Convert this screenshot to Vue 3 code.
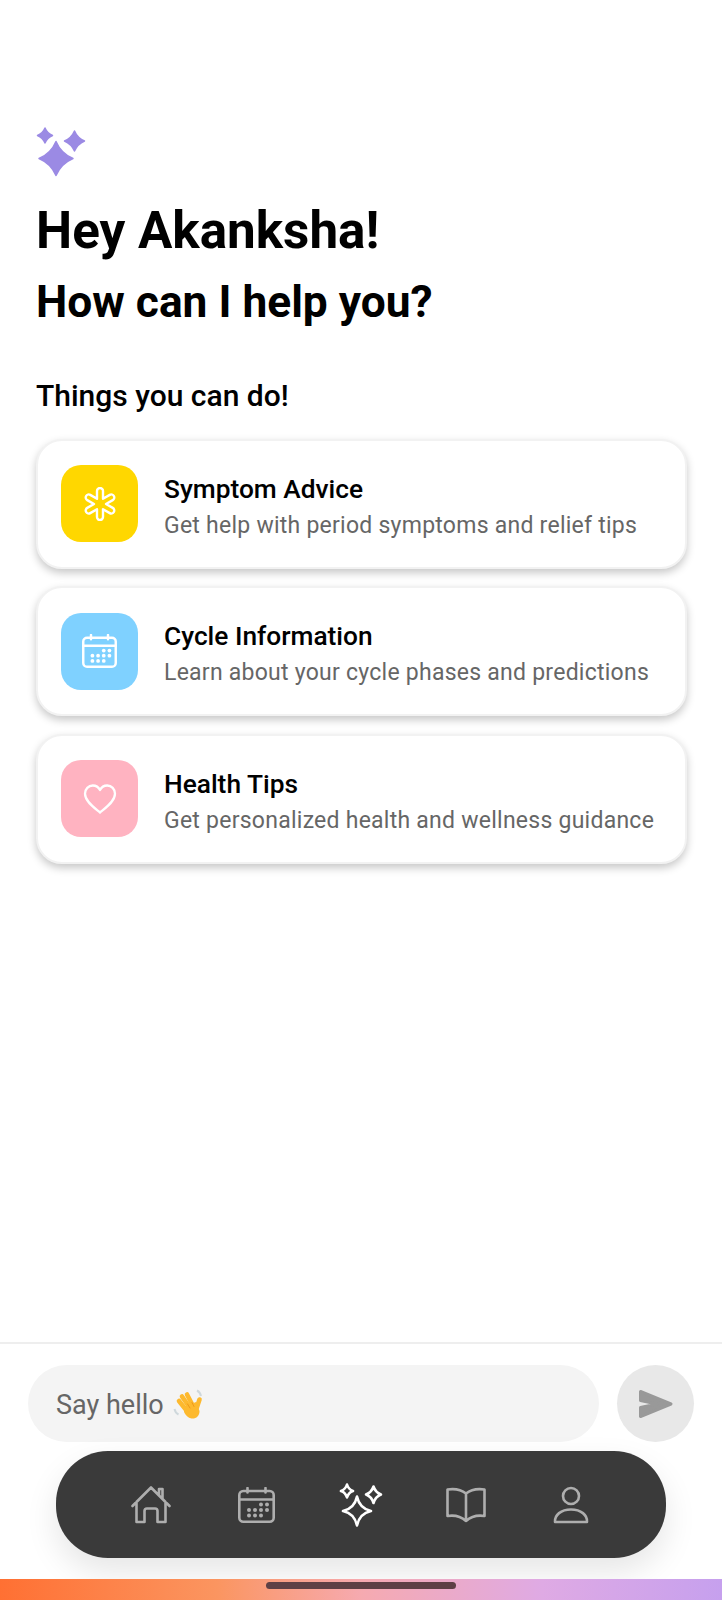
<template>
  <div class="page">
    <svg class="sprite" width="0" height="0">
      <symbol id="calendar" viewBox="0 0 37 36">
        <rect x="1.3" y="4" width="34.4" height="30.7" rx="4" fill="none" stroke="currentColor" stroke-width="2.6" />
        <path d="M1.300 12.500H35.700M9.500 1V5.500M27.500 1V5.500" fill="none" stroke="currentColor" stroke-width="2.6" stroke-linecap="round" />
        <circle v-for="d in calendarDots" :key="d[0] + '-' + d[1]" :cx="d[0]" :cy="d[1]" r="2" fill="currentColor" />
      </symbol>
    </svg>

    <main class="content">
      <svg class="sparkle-logo" width="50" height="50" viewBox="0 0 50 50">
        <path d="M9 1Q11.200 6.300 16.500 8.500Q11.200 10.700 9 16Q6.800 10.700 1.500 8.500Q6.800 6.300 9 1Z" />
        <path d="M38.500 4Q41.500 11 48.500 14Q41.500 17 38.500 24Q35.500 17 28.500 14Q35.500 11 38.500 4Z" />
        <path d="M20 14.500Q25 26.500 37 31.500Q25 36.500 20 48.500Q15 36.500 3 31.500Q15 26.500 20 14.500Z" />
      </svg>
      <h1 class="greeting">Hey Akanksha!</h1>
      <h2 class="question">How can I help you?</h2>
      <h3 class="section-title">Things you can do!</h3>

      <div class="cards">
        <div v-for="card in cards" :key="card.title" class="card">
          <div class="card-icon" :class="card.tone">
            <svg v-if="card.icon === 'asterisk'" width="34" height="34" viewBox="-17 -17 34 34">
              <path :d="asteriskPath" fill="none" stroke="#fff" stroke-width="2.4" stroke-linejoin="round" />
            </svg>
            <svg v-else-if="card.icon === 'calendar'" width="35" height="34">
              <use href="#calendar" />
            </svg>
            <svg v-else width="34" height="30" viewBox="0 0 34 30">
              <path d="M17 28.500C12 24.300 2 17.500 2 9.800C2 5 5.500 1.500 9.800 1.500C12.800 1.500 15.500 3 17 6C18.500 3 21.200 1.500 24.200 1.500C28.500 1.500 32 5 32 9.800C32 17.500 22 24.300 17 28.500Z" fill="none" stroke="#fff" stroke-width="2.300" stroke-linejoin="round" />
            </svg>
          </div>
          <div class="card-text">
            <div class="card-title">{{ card.title }}</div>
            <div class="card-sub">{{ card.sub }}</div>
          </div>
        </div>
      </div>
    </main>

    <div class="composer">
      <div class="input">
        <span class="placeholder">Say hello</span>
        <svg class="wave" width="34" height="34" viewBox="0 0 34 34">
          <path d="M26 3.500C28 4.500 29.500 6.500 30 9M3.500 22C4 24.500 5.500 26.500 7.500 27.500" fill="none" stroke="#cfd8dc" stroke-width="2" />
          <g fill="none" stroke="#fdb92e" stroke-width="4.600" stroke-linecap="round">
            <path d="M8 14L16 24" />
            <path d="M11 9.500L19 21" />
            <path d="M16 7.500L22 19" />
            <path d="M28.500 12.500L25 23" />
          </g>
          <path d="M13 20L25 15L28.500 24C28.500 29 25 32 20.500 31.500C17 31 14.500 28 13 25Z" fill="#fdb92e" />
          <path d="M19 21L16.500 17M23 19.500L21 15.500" fill="none" stroke="#f09a1a" stroke-width="1" stroke-linecap="round" />
        </svg>
      </div>
      <button class="send" type="button" aria-label="Send">
        <svg width="36" height="30" viewBox="0 0 36 30">
          <path d="M2.500 2.500L33 15L2.500 27.500V18.500L19 15L2.500 11.500Z" fill="#999" stroke="#999" stroke-width="3" stroke-linejoin="round" />
        </svg>
      </button>
    </div>

    <nav class="nav">
      <span class="nav-item">
        <svg width="40" height="38" viewBox="0 0 40 38" fill="none" stroke="#aeaeae" stroke-width="2.600" stroke-linejoin="round" stroke-linecap="round">
          <path d="M1.500 20L20 1.500L38.500 20M5.500 16V36H13.500V25A2.500 2.500 0 0 1 16 22.500H24A2.500 2.500 0 0 1 26.500 25V36H34.500V16M28 9V3H31.500V12.500" />
        </svg>
      </span>
      <span class="nav-item muted">
        <svg width="37" height="36">
          <use href="#calendar" />
        </svg>
      </span>
      <span class="nav-item">
        <svg width="44" height="44" viewBox="0 0 44 44" fill="none" stroke="#fff" stroke-width="2.600" stroke-linejoin="round">
          <path d="M8 1.500Q9.500 6.500 14 8Q9.500 9.500 8 14.500Q6.500 9.500 2 8Q6.500 6.500 8 1.500Z" />
          <path d="M34.500 3.500Q36.500 9.500 42 11.500Q36.500 13.500 34.500 20Q32.500 13.500 27 11.500Q32.500 9.500 34.500 3.500Z" />
          <path d="M18 13.500Q20.500 25.500 32 28Q20.500 30.500 18 42.500Q15.500 30.500 4 28Q15.500 25.500 18 13.500Z" />
        </svg>
      </span>
      <span class="nav-item">
        <svg width="40" height="36" viewBox="0 0 40 36" fill="none" stroke="#aeaeae" stroke-width="2.600" stroke-linejoin="round" stroke-linecap="round">
          <path d="M20 6.500C15 2.500 8 1.500 1.500 2.500V29C8 28 15 29.500 20 34C25 29.500 32 28 38.500 29V2.500C32 1.500 25 2.500 20 6.500ZM20 6.500V34" />
        </svg>
      </span>
      <span class="nav-item">
        <svg width="36" height="38" viewBox="0 0 36 38" fill="none" stroke="#aeaeae" stroke-width="2.600" stroke-linejoin="round">
          <circle cx="18" cy="10" r="8" />
          <path d="M2 36C1.500 29 8 23.500 18 23.500C28 23.500 34.500 29 34 36Z" />
        </svg>
      </span>
    </nav>

    <div class="gesture-bar">
      <span class="handle"></span>
    </div>
  </div>
</template>

<script setup>
const cards = [
  { title: 'Symptom Advice', sub: 'Get help with period symptoms and relief tips', tone: 'yellow', icon: 'asterisk' },
  { title: 'Cycle Information', sub: 'Learn about your cycle phases and predictions', tone: 'blue', icon: 'calendar' },
  { title: 'Health Tips', sub: 'Get personalized health and wellness guidance', tone: 'pink', icon: 'heart' },
]

const calendarDots = [
  [23, 17.5], [29, 17.5],
  [11, 23], [17, 23], [23, 23], [29, 23],
  [11, 28.5], [17, 28.5], [23, 28.5],
]

// Six rounded arms around the centre, drawn as one outline
function buildAsterisk(halfWidth, length) {
  const inner = halfWidth * 2
  let d = ''
  for (let i = 0; i < 6; i++) {
    const a = (i * Math.PI) / 3 - Math.PI / 2
    const ix = inner * Math.cos(a - Math.PI / 6)
    const iy = inner * Math.sin(a - Math.PI / 6)
    const px = -Math.sin(a) * halfWidth
    const py = Math.cos(a) * halfWidth
    const ex = Math.cos(a) * length
    const ey = Math.sin(a) * length
    d += `${i === 0 ? 'M' : 'L'}${ix.toFixed(2)} ${iy.toFixed(2)}`
    d += `L${(ex - px).toFixed(2)} ${(ey - py).toFixed(2)}`
    d += `A${halfWidth} ${halfWidth} 0 0 1 ${(ex + px).toFixed(2)} ${(ey + py).toFixed(2)}`
  }
  return d + 'Z'
}

const asteriskPath = buildAsterisk(3, 13)
</script>

<style>
html,
body {
  margin: 0;
  background: #fff;
}
</style>

<style scoped>
.page {
  width: 722px;
  height: 1600px;
  display: flex;
  flex-direction: column;
  background: #fff;
  font-family: Roboto, 'Liberation Sans', sans-serif;
  overflow: hidden;
}

.sprite {
  display: none;
}

.content {
  flex: 1;
  padding: 127px 35px 0 36px;
}

.sparkle-logo {
  display: block;
  fill: #9b8ae4;
  stroke: #9b8ae4;
  stroke-width: 1.5;
  stroke-linejoin: round;
}

.greeting {
  margin: 22px 0 0;
  font-size: 51.2px;
  line-height: 64px;
  font-weight: 700;
  color: #000;
}

.question {
  margin: 11px 0 0;
  font-size: 44.3px;
  line-height: 56px;
  font-weight: 700;
  color: #000;
}

.section-title {
  margin: 47px 0 0;
  font-size: 30px;
  line-height: 38px;
  font-weight: 500;
  color: #000;
}

.cards {
  margin-top: 23.5px;
  display: flex;
  flex-direction: column;
  gap: 17.5px;
}

.card {
  height: 130px;
  box-sizing: border-box;
  display: flex;
  align-items: center;
  gap: 26px;
  padding: 0 23px;
  background: #fff;
  border: 2px solid #f2f2f2;
  border-radius: 26px;
  box-shadow: 0 4px 8px rgba(0, 0, 0, 0.22);
}

.card-icon {
  width: 77px;
  height: 77px;
  flex-shrink: 0;
  border-radius: 20px;
  display: flex;
  align-items: center;
  justify-content: center;
}

.card-icon svg {
  display: block;
  color: #fff;
}

.yellow {
  background: #ffd700;
}

.blue {
  background: #7fd1ff;
}

.pink {
  background: #ffb3c1;
}

.card-text {
  padding-top: 6px;
}

.card-title {
  font-size: 26.3px;
  line-height: 34px;
  font-weight: 500;
  color: #000;
}

.card-sub {
  margin-top: 4px;
  font-size: 23px;
  line-height: 32px;
  letter-spacing: 0.25px;
  color: #666;
}

.composer {
  border-top: 2px solid #eee;
  padding: 21px 28px 0;
  display: flex;
  align-items: center;
  gap: 18px;
}

.input {
  flex: 1;
  height: 77px;
  display: flex;
  align-items: center;
  gap: 7px;
  padding-left: 28px;
  background: #f4f4f4;
  border-radius: 39px;
  font-size: 27px;
  color: #666;
}

.placeholder {
  padding-top: 3px;
}

.send {
  width: 77px;
  height: 77px;
  padding: 0;
  border: none;
  border-radius: 50%;
  background: #e8e8e8;
  display: flex;
  align-items: center;
  justify-content: center;
}

.nav {
  margin: 9px 56px 0;
  height: 107px;
  display: flex;
  align-items: center;
  justify-content: center;
  gap: 61px;
  background: #3a3a3a;
  border-radius: 52px;
  box-shadow: 0 14px 32px rgba(0, 0, 0, 0.1);
}

.nav-item {
  width: 44px;
  display: flex;
  justify-content: center;
  flex-shrink: 0;
}

.nav-item svg {
  display: block;
}

.muted {
  color: #aeaeae;
}

.gesture-bar {
  position: relative;
  margin-top: 21px;
  height: 21px;
  display: flex;
  justify-content: center;
  padding-top: 3px;
  box-sizing: border-box;
  background: linear-gradient(90deg, #ff7033 0%, #fb9560 30%, #f6aab0 50%, #dfaae4 75%, #c6a0ee 100%);
}

.handle {
  width: 190px;
  height: 7px;
  border-radius: 4px;
  background: #5e4045;
}
</style>
